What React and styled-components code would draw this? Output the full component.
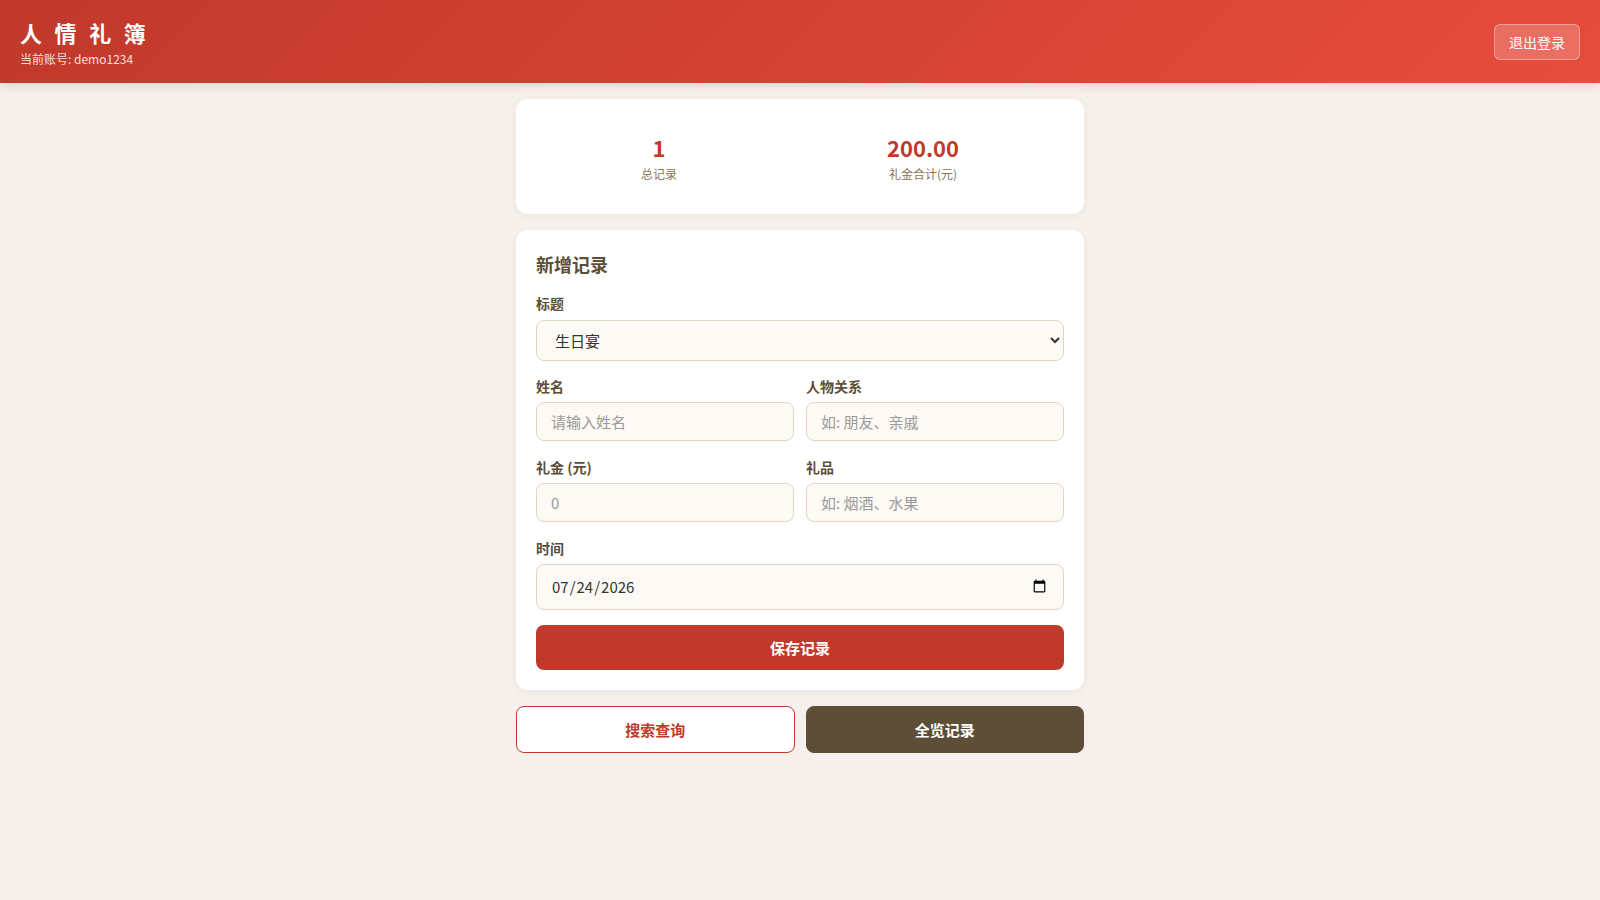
import React from "react";
import styled, { createGlobalStyle } from "styled-components";

const GlobalStyle = createGlobalStyle`
  * { box-sizing: border-box; }
  body {
    margin: 0;
    background: #f5f0eb;
    font-family: "Noto Sans CJK SC", "Noto Sans", sans-serif;
    color: #333;
  }
`;

const Header = styled.header`
  display: flex;
  align-items: center;
  justify-content: space-between;
  padding: 17px 20px 15px;
  background: linear-gradient(135deg, #c0392b 0%, #e74c3c 100%);
  color: #fff;
  box-shadow: 0 2px 10px rgba(0, 0, 0, 0.12);
`;

const Brand = styled.div`
  display: flex;
  flex-direction: column;
`;

const Title = styled.h1`
  margin: 0;
  font-size: 22px;
  line-height: 1.4;
  font-weight: 700;
  letter-spacing: 12.6px;
`;

const Account = styled.div`
  margin-top: 3px;
  font-size: 12px;
  line-height: 1.4;
  color: rgba(255, 255, 255, 0.85);
`;

const LogoutButton = styled.button`
  font-family: inherit;
  font-size: 14px;
  line-height: 1.45;
  padding: 7px 14px;
  color: #fff;
  background: rgba(255, 255, 255, 0.2);
  border: 1px solid rgba(255, 255, 255, 0.35);
  border-radius: 6px;
  cursor: pointer;
`;

const Main = styled.main`
  max-width: 600px;
  margin: 0 auto;
  padding: 16px;
  display: flex;
  flex-direction: column;
  gap: 16px;
`;

const Card = styled.section`
  background: #fff;
  border-radius: 12px;
  padding: 21px 20px 20px;
  box-shadow: 0 2px 8px rgba(93, 78, 55, 0.06);
`;

const StatsCard = styled(Card)`
  display: flex;
  justify-content: space-around;
  align-items: center;
  padding: 33px 20px 31px;
`;

const Stat = styled.div`
  display: flex;
  flex-direction: column;
  align-items: center;
  gap: 4px;
`;

const StatValue = styled.div`
  font-size: 22px;
  line-height: 1.4;
  font-weight: 700;
  color: #c0392b;
`;

const StatLabel = styled.div`
  font-size: 12px;
  line-height: 1.4;
  color: #8b7355;
`;

const CardTitle = styled.h2`
  margin: 0 0 16px;
  font-size: 18px;
  line-height: 1.45;
  font-weight: 700;
  color: #5d4e37;
`;

const Field = styled.div`
  display: flex;
  flex-direction: column;
  margin-bottom: 15.5px;
`;

const Row = styled.div`
  display: grid;
  grid-template-columns: 1fr 1fr;
  gap: 12px;
`;

const Label = styled.label`
  font-size: 14px;
  line-height: 1.45;
  font-weight: 700;
  color: #5d4e37;
  margin-bottom: 6px;
`;

const controlStyles = `
  width: 100%;
  font-family: "Noto Sans CJK SC", "Noto Sans", sans-serif;
  font-size: 15px;
  color: #333;
  background: #fdf9f4;
  border: 1px solid #e0d5c5;
  border-radius: 8px;
  outline: none;
  &::placeholder { color: #999; }
`;

const Input = styled.input`
  ${controlStyles}
  height: 39px;
  padding: 0 14px;
`;

const DateInput = styled.input`
  ${controlStyles}
  height: 46px;
  padding: 0 14px;
`;

const Select = styled.select`
  ${controlStyles}
  height: 41px;
  padding: 0 14px;
`;

const SaveButton = styled.button`
  width: 100%;
  height: 45px;
  font-family: inherit;
  font-size: 15px;
  font-weight: 700;
  color: #fff;
  background: #c0392b;
  border: none;
  border-radius: 8px;
  cursor: pointer;
`;

const ActionRow = styled.div`
  display: grid;
  grid-template-columns: 1fr 1fr;
  gap: 11px;
`;

const ActionButton = styled.button`
  height: 47px;
  font-family: inherit;
  font-size: 15px;
  font-weight: 700;
  border-radius: 8px;
  cursor: pointer;
  color: ${(p) => (p.$variant === "outline" ? "#c0392b" : "#fff")};
  background: ${(p) => (p.$variant === "outline" ? "#fff" : "#5d4e37")};
  border: 1px solid ${(p) => (p.$variant === "outline" ? "#c0392b" : "#5d4e37")};
`;

export default function App() {
  return (
    <>
      <GlobalStyle />
      <Header>
        <Brand>
          <Title>人情礼簿</Title>
          <Account>当前账号: demo1234</Account>
        </Brand>
        <LogoutButton>退出登录</LogoutButton>
      </Header>
      <Main>
        <StatsCard>
          <Stat>
            <StatValue>1</StatValue>
            <StatLabel>总记录</StatLabel>
          </Stat>
          <Stat>
            <StatValue>200.00</StatValue>
            <StatLabel>礼金合计(元)</StatLabel>
          </Stat>
        </StatsCard>

        <Card>
          <CardTitle>新增记录</CardTitle>
          <Field>
            <Label>标题</Label>
            <Select defaultValue="生日宴">
              <option>婚礼</option>
              <option>生日宴</option>
              <option>满月酒</option>
              <option>乔迁</option>
              <option>其他</option>
            </Select>
          </Field>
          <Row>
            <Field>
              <Label>姓名</Label>
              <Input placeholder="请输入姓名" />
            </Field>
            <Field>
              <Label>人物关系</Label>
              <Input placeholder="如: 朋友、亲戚" />
            </Field>
          </Row>
          <Row>
            <Field>
              <Label>礼金 (元)</Label>
              <Input type="number" placeholder="0" />
            </Field>
            <Field>
              <Label>礼品</Label>
              <Input placeholder="如: 烟酒、水果" />
            </Field>
          </Row>
          <Field>
            <Label>时间</Label>
            <DateInput type="date" defaultValue="2026-07-24" />
          </Field>
          <SaveButton>保存记录</SaveButton>
        </Card>

        <ActionRow>
          <ActionButton $variant="outline">搜索查询</ActionButton>
          <ActionButton $variant="solid">全览记录</ActionButton>
        </ActionRow>
      </Main>
    </>
  );
}
